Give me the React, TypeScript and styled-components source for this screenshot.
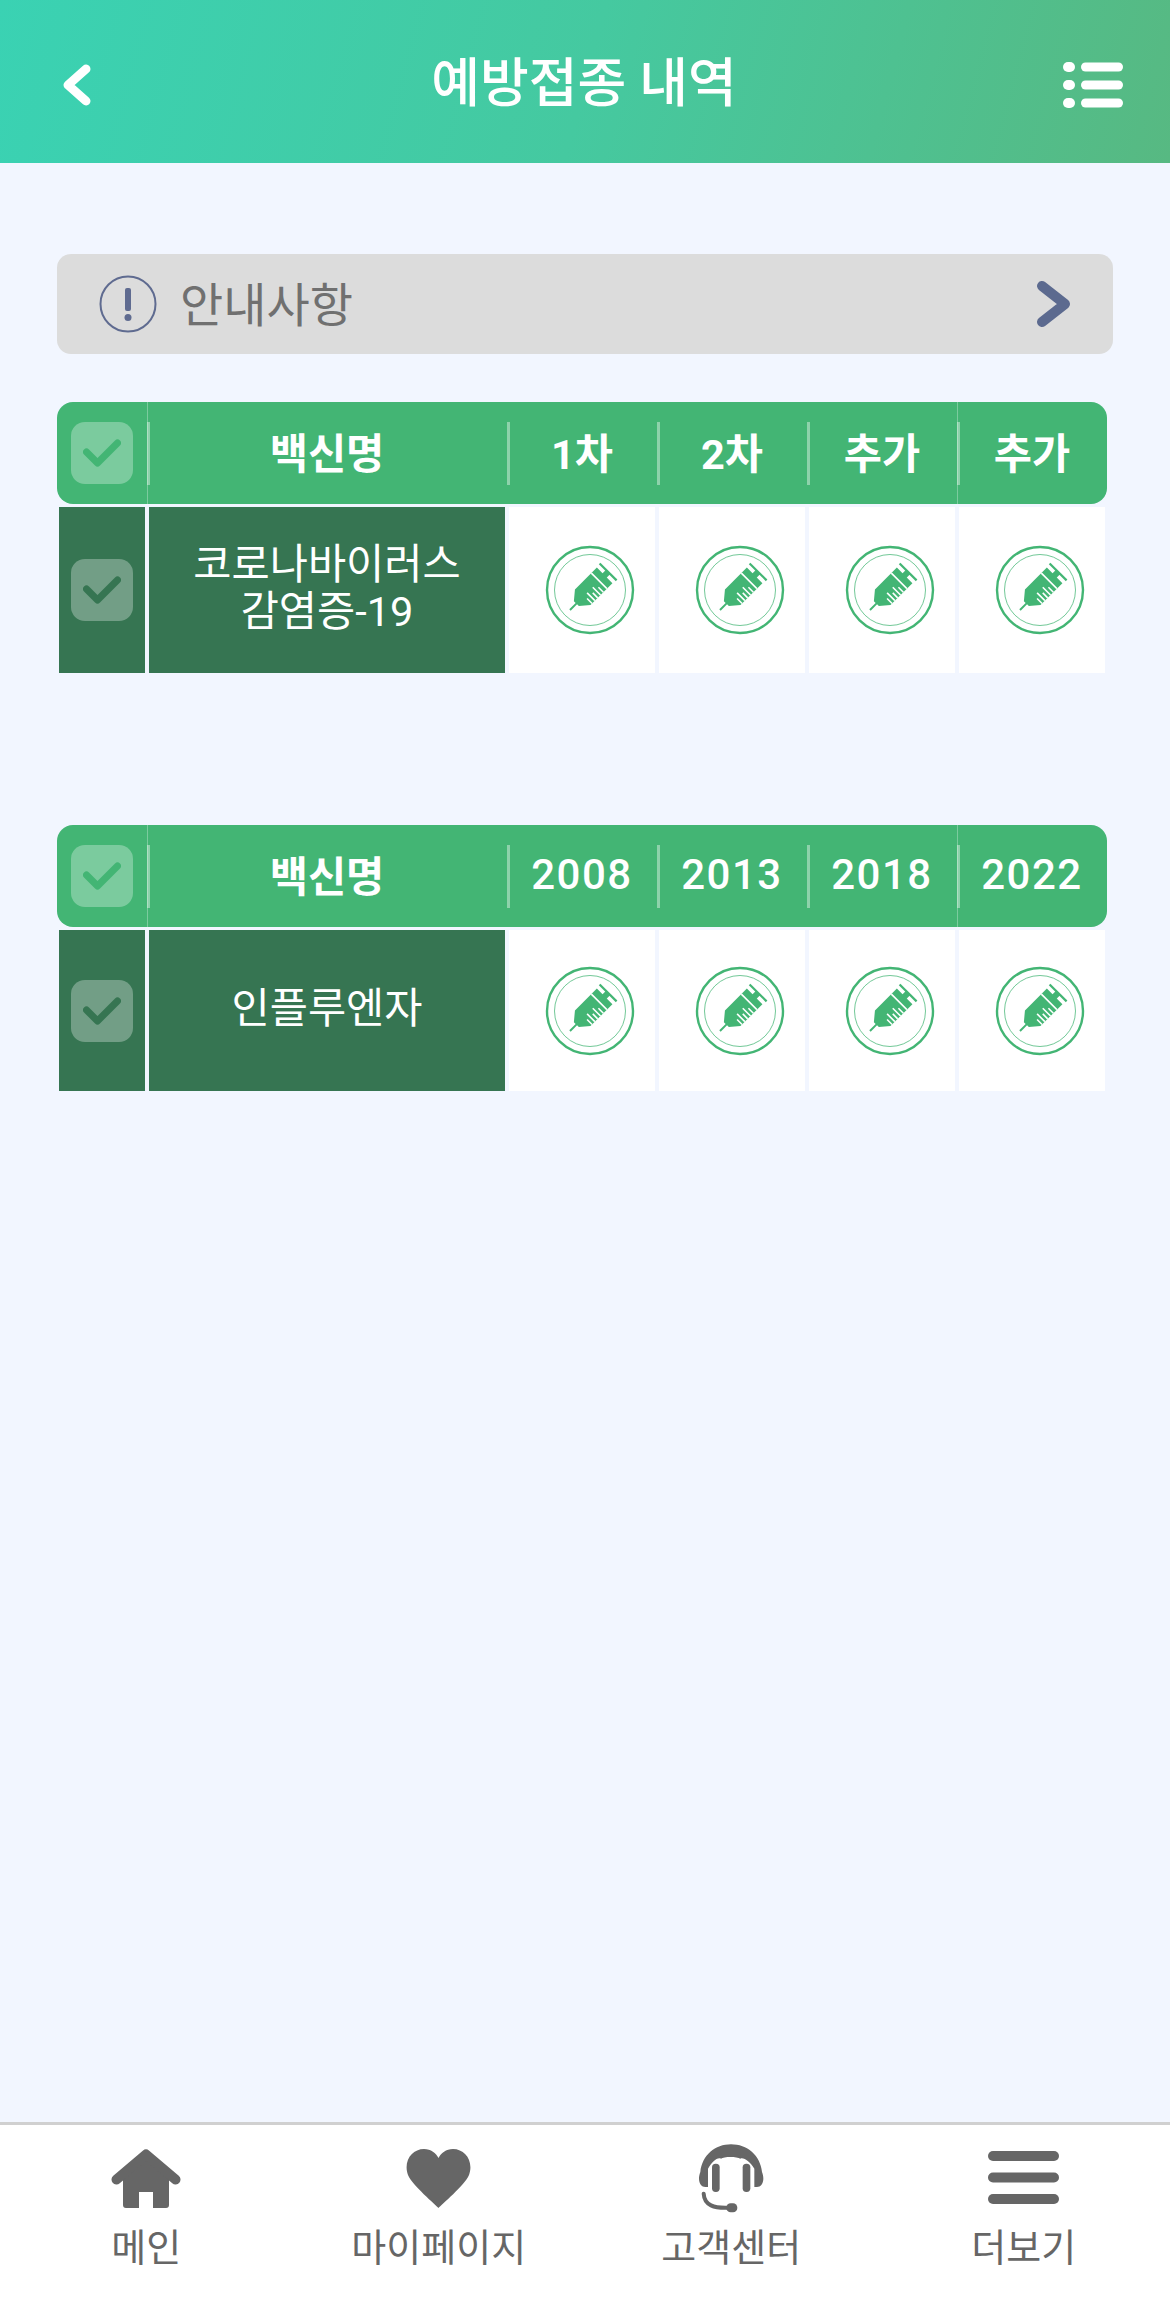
import React from "react";
import styled, { createGlobalStyle } from "styled-components";

const Global = createGlobalStyle`
  html, body { margin: 0; padding: 0; background: #f2f6ff; }
  * { box-sizing: border-box; }
  body {
    font-family: Roboto, "Noto Sans CJK KR", "Noto Sans", sans-serif;
  }
`;

const Page = styled.div`
  width: 1170px;
  height: 2324px;
  display: flex;
  flex-direction: column;
  background: #f2f6ff;
`;

const TopBar = styled.header`
  height: 163px;
  flex: none;
  padding: 6px 47px 0 62px;
  display: flex;
  align-items: center;
  justify-content: space-between;
  background: linear-gradient(105deg, #3ad2b3 0%, #45c9a0 50%, #57b982 100%);
`;

const Title = styled.h1`
  margin: 0 0 11px 13px;
  font-size: 53px;
  font-weight: 500;
  color: #fff;
`;

const Main = styled.main`
  flex: 1;
  padding: 91px 57px 0;
`;

const Notice = styled.div`
  height: 100px;
  margin-bottom: 48px;
  padding: 0 41px 0 42px;
  display: flex;
  align-items: center;
  gap: 23px;
  border-radius: 14px;
  background: #dcdcdc;
`;

const NoticeText = styled.span`
  flex: 1;
  padding-bottom: 5px;
  font-size: 47px;
  font-weight: 400;
  color: #707070;
`;

const Table = styled.section<{ $gapAfter?: number }>`
  width: 1050px;
  margin-bottom: ${(p) => p.$gapAfter ?? 0}px;
`;

const HeadRow = styled.div`
  height: 102px;
  margin-bottom: 3px;
  display: grid;
  grid-template-columns: 90px 360px 150px 150px 150px 150px;
  border-radius: 16px;
  background: #43b574;
`;

const HeadCell = styled.div<{ $seam?: boolean }>`
  position: relative;
  padding-bottom: 4px;
  display: flex;
  align-items: center;
  justify-content: center;
  font-size: 41.5px;
  font-weight: 700;
  color: #fff;
  &::before {
    content: "";
    position: absolute;
    left: 0;
    top: 20px;
    bottom: 19px;
    width: 3px;
    background: rgba(255, 255, 255, 0.4);
  }
  &::after {
    content: "";
    display: ${(p) => (p.$seam ? "block" : "none")};
    position: absolute;
    left: 0;
    top: 0;
    bottom: 0;
    width: 1px;
    background: rgba(255, 255, 255, 0.3);
  }
`;

const HeadNumber = styled.span`
  font-size: 42px;
  font-weight: 500;
  letter-spacing: 1.5px;
`;

const BodyRow = styled.div<{ $height: number }>`
  height: ${(p) => p.$height}px;
  padding: 0 2px;
  display: grid;
  grid-template-columns: 86px 356px 146px 146px 146px 146px;
  column-gap: 4px;
`;

const CheckCell = styled.div`
  display: flex;
  align-items: center;
  padding-left: 12px;
  background: #367552;
`;

const HeadCheckCell = styled.div`
  display: flex;
  align-items: center;
  padding-left: 14px;
`;

const CheckBox = styled.div`
  width: 62px;
  height: 62px;
  display: flex;
  align-items: center;
  justify-content: center;
  border-radius: 14px;
  background: rgba(255, 255, 255, 0.3);
`;

const NameCell = styled.div`
  padding-bottom: 4px;
  display: flex;
  align-items: center;
  justify-content: center;
  text-align: center;
  font-size: 41.5px;
  font-weight: 400;
  line-height: 47px;
  color: #fff;
  background: #367552;
`;

const DoseCell = styled.div`
  display: flex;
  align-items: center;
  justify-content: center;
  padding-left: 16px;
  background: #fff;
`;

const BottomNav = styled.nav`
  height: 202px;
  flex: none;
  padding-top: 17px;
  display: grid;
  grid-template-columns: repeat(4, 1fr);
  border-top: 3px solid #d0d0d0;
  background: #fff;
`;

const NavItem = styled.div`
  display: flex;
  flex-direction: column;
  align-items: center;
`;

const NavIcon = styled.div`
  height: 72px;
  display: flex;
  align-items: center;
  justify-content: center;
`;

const NavLabel = styled.span`
  margin-top: 8px;
  font-size: 38px;
  line-height: 52px;
  font-weight: 400;
  color: #666;
`;

const Check = ({ color }: { color: string }) => (
  <svg width="38" height="28" viewBox="0 0 38 28" fill="none">
    <path d="M3.5 13 L14.5 24 L34.5 4" stroke={color} strokeWidth="7" strokeLinecap="round" strokeLinejoin="round" />
  </svg>
);

const Syringe = () => (
  <svg width="90" height="90" viewBox="-45 -45 90 90" fill="none">
    <circle r="43" stroke="#43b574" strokeWidth="2.4" />
    <circle r="35.5" stroke="#43b574" strokeWidth="1" opacity="0.75" />
    <g transform="rotate(45) translate(0 -25.7)">
      <rect x="-12" y="-1" width="24" height="2.2" fill="#43b574" />
      <rect x="-3" y="0" width="6" height="6" fill="#43b574" />
      <path d="M-11 5 H11 V36 L3.5 45 H1 V54 H-1 V45 H-3.5 L-11 36 Z" fill="#43b574" />
      <rect x="-11" y="12" width="22" height="1.6" fill="#fff" />
      <rect x="4" y="17" width="7" height="1.6" fill="#fff" />
      <rect x="0" y="21" width="11" height="1.6" fill="#fff" />
      <rect x="4" y="25" width="7" height="1.6" fill="#fff" />
      <rect x="0" y="29" width="11" height="1.6" fill="#fff" />
      <rect x="4" y="33" width="7" height="1.6" fill="#fff" />
    </g>
  </svg>
);

const Back = () => (
  <svg width="30" height="42" viewBox="0 0 30 42" fill="none">
    <path d="M24 5 L6 21 L24 37" stroke="#fff" strokeWidth="9" strokeLinecap="round" strokeLinejoin="round" />
  </svg>
);

const ListIcon = () => (
  <svg width="60" height="46" viewBox="0 0 60 46" fill="#fff">
    <rect x="0" y="0" width="12" height="10" rx="5" />
    <rect x="0" y="18" width="12" height="10" rx="5" />
    <rect x="0" y="36" width="12" height="10" rx="5" />
    <rect x="18" y="0.5" width="42" height="9" rx="4.5" />
    <rect x="18" y="18.5" width="42" height="9" rx="4.5" />
    <rect x="18" y="36.5" width="42" height="9" rx="4.5" />
  </svg>
);

const Info = () => (
  <svg width="58" height="58" viewBox="0 0 58 58" fill="none">
    <circle cx="29" cy="29" r="27.5" stroke="#5f6b90" strokeWidth="2" />
    <rect x="26" y="13" width="6" height="23" rx="2" fill="#5f6b90" />
    <circle cx="29" cy="42.5" r="3.5" fill="#5f6b90" />
  </svg>
);

const Forward = () => (
  <svg width="36" height="48" viewBox="0 0 36 48" fill="none">
    <path d="M6 6 L29 24 L6 42" stroke="#5c6a8f" strokeWidth="10" strokeLinecap="round" strokeLinejoin="round" />
  </svg>
);

const Home = () => (
  <svg width="70" height="59" viewBox="0 0 70 59" fill="#666">
    <path d="M12 24 L35 6 L58 24 V56 Q58 59 55 59 H42 V43 H28 V59 H15 Q12 59 12 56 Z" />
    <path d="M5.5 30.5 L35 5.5 L64.5 30.5" fill="none" stroke="#666" strokeWidth="10" strokeLinecap="round" strokeLinejoin="round" />
  </svg>
);

const Heart = () => (
  <svg width="65" height="59" viewBox="0 0 65 59" fill="#666">
    <path d="M32.5 59 C30 56 6 36 2 26 C-3 12 6 0 18 0 C25 0 30 4 32.5 9 C35 4 40 0 47 0 C59 0 68 12 63 26 C59 36 35 56 32.5 59 Z" />
  </svg>
);

const Headset = () => (
  <svg width="68" height="72" viewBox="50 15 204 216" fill="#666">
    <path d="M75 150 C60 150 50 130 60 105 C65 55 105 22 152 22 C200 22 240 55 245 105 C255 130 245 150 230 150 L222 150 L222 95 C210 75 190 60 180 65 C170 58 130 58 122 65 C110 60 95 75 83 95 L83 150 Z" />
    <rect x="95" y="80" width="23" height="85" rx="11" />
    <rect x="187" y="80" width="23" height="85" rx="11" />
    <path d="M70 170 C72 205 100 215 150 212" fill="none" stroke="#666" strokeWidth="12" strokeLinecap="round" />
    <rect x="138" y="199" width="33" height="27" rx="13" />
  </svg>
);

const Menu = () => (
  <svg width="71" height="54" viewBox="0 0 71 54" fill="#666">
    <rect x="0" y="0" width="71" height="10" rx="5" />
    <rect x="0" y="21.5" width="71" height="10" rx="5" />
    <rect x="0" y="43" width="71" height="10" rx="5" />
  </svg>
);

type TableData = { heads: string[]; lines: string[]; height: number; gapAfter?: number; numeric?: boolean };

const tables: TableData[] = [
  { heads: ["1차", "2차", "추가", "추가"], lines: ["코로나바이러스", "감염증-19"], height: 166, gapAfter: 152 },
  { heads: ["2008", "2013", "2018", "2022"], lines: ["인플루엔자"], height: 161, numeric: true },
];

const navItems = [
  { label: "메인", icon: <Home /> },
  { label: "마이페이지", icon: <Heart /> },
  { label: "고객센터", icon: <Headset /> },
  { label: "더보기", icon: <Menu /> },
];

export default function App() {
  return (
    <Page>
      <Global />
      <TopBar>
        <Back />
        <Title>예방접종 내역</Title>
        <ListIcon />
      </TopBar>
      <Main>
        <Notice>
          <Info />
          <NoticeText>안내사항</NoticeText>
          <Forward />
        </Notice>
        {tables.map((t, i) => (
          <Table key={i} $gapAfter={t.gapAfter}>
            <HeadRow>
              <HeadCheckCell>
                <CheckBox>
                  <Check color="#43b574" />
                </CheckBox>
              </HeadCheckCell>
              <HeadCell $seam>백신명</HeadCell>
              {t.heads.map((h, j) => (
                <HeadCell key={j} $seam={j === 3}>
                  {t.numeric ? <HeadNumber>{h}</HeadNumber> : h}
                </HeadCell>
              ))}
            </HeadRow>
            <BodyRow $height={t.height}>
              <CheckCell>
                <CheckBox>
                  <Check color="#367552" />
                </CheckBox>
              </CheckCell>
              <NameCell>
                <div>
                  {t.lines.map((l) => (
                    <div key={l}>{l}</div>
                  ))}
                </div>
              </NameCell>
              {t.heads.map((_, j) => (
                <DoseCell key={j}>
                  <Syringe />
                </DoseCell>
              ))}
            </BodyRow>
          </Table>
        ))}
      </Main>
      <BottomNav>
        {navItems.map((n) => (
          <NavItem key={n.label}>
            <NavIcon>{n.icon}</NavIcon>
            <NavLabel>{n.label}</NavLabel>
          </NavItem>
        ))}
      </BottomNav>
    </Page>
  );
}
